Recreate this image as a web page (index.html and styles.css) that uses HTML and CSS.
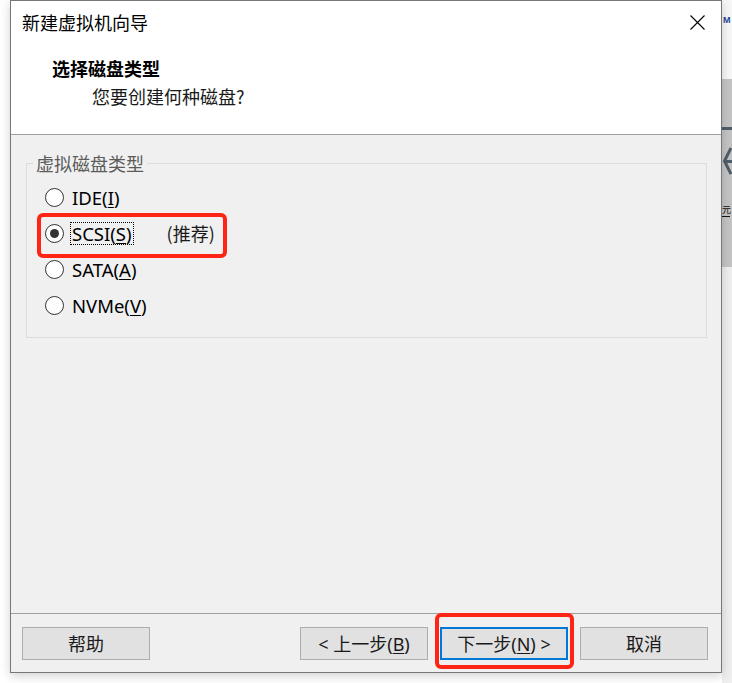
FILE: index.html
```html
<!DOCTYPE html>
<html lang="zh-CN">
<head>
<meta charset="utf-8">
<title>新建虚拟机向导</title>
<link rel="stylesheet" href="styles.css">
</head>
<body>
<div class="screen">
  <div class="left-gap"></div>
  <div class="dialog">
    <div class="header">
      <div class="titlebar">
        <span class="title">新建虚拟机向导</span>
        <span class="close"><svg viewBox="0 0 15 15" width="15" height="15"><path d="M0.5 0.5 L14.5 14.5 M14.5 0.5 L0.5 14.5" stroke="#000" stroke-width="1.1" fill="none"/></svg></span>
      </div>
      <div class="heading">选择磁盘类型</div>
      <div class="subheading">您要创建何种磁盘?</div>
    </div>
    <div class="body">
      <fieldset class="group">
        <legend>虚拟磁盘类型</legend>
        <div class="option"><span class="radio"></span><span class="label">IDE(<u>I</u>)</span></div>
        <div class="option"><span class="radio checked"></span><span class="label focus">SCSI(<u>S</u>)</span><span class="hint">(推荐)</span><span class="mark mark-option"></span></div>
        <div class="option"><span class="radio"></span><span class="label">SATA(<u>A</u>)</span></div>
        <div class="option"><span class="radio"></span><span class="label">NVMe(<u>V</u>)</span></div>
      </fieldset>
    </div>
    <div class="footer">
      <button class="btn">帮助</button>
      <div class="spacer"></div>
      <button class="btn">&lt; 上一步(<u>B</u>)</button>
      <button class="btn primary">下一步(<u>N</u>) &gt;<span class="mark mark-button"></span></button>
      <button class="btn">取消</button>
    </div>
  </div>
  <div class="right-bg">
    <div class="bg-top"><span class="bg-logo">M</span></div>
    <div class="bg-mid">
      <svg viewBox="0 0 10 188" width="10" height="188">
        <rect x="0" y="48" width="10" height="3" fill="#4f5e69"/>
        <path d="M9 69 L2.5 82 L9 95" stroke="#4f5e69" stroke-width="3" fill="none"/>
        <rect x="3" y="81" width="7" height="3" fill="#4f5e69"/>
        <text x="0" y="134" font-size="9" font-family="Noto Sans CJK SC" fill="#111">元</text>
        <rect x="0" y="137" width="8" height="1" fill="#111"/>
      </svg>
    </div>
    <div class="bg-bottom"></div>
  </div>
</div>
</body>
</html>
```

FILE: styles.css
```css
* {
  box-sizing: border-box;
}

html,
body {
  margin: 0;
  padding: 0;
}

body {
  background: #ffffff;
  font-family: "Noto Sans", "Noto Sans CJK SC", sans-serif;
  color: #000000;
}

.screen {
  display: flex;
  width: 732px;
  height: 683px;
  overflow: hidden;
  background: #ffffff;
}

.left-gap {
  width: 10px;
  flex: none;
}

.dialog {
  width: 712px;
  height: 673px;
  flex: none;
  border: 1px solid #777777;
  background: #f0f0f0;
  display: flex;
  flex-direction: column;
  position: relative;
  z-index: 1;
  box-shadow: 0 3px 10px rgba(0, 0, 0, 0.18);
}

/* header */
.header {
  height: 134px;
  flex: none;
  background: #ffffff;
  border-bottom: 1px solid #a0a0a0;
}

.titlebar {
  height: 42px;
  display: flex;
  align-items: center;
  justify-content: space-between;
  padding: 0 16px 0 11px;
}

.title {
  font-family: "Noto Sans CJK SC", sans-serif;
  font-size: 18px;
  line-height: 24px;
}

.close svg {
  display: block;
}

.heading {
  font-family: "Noto Sans CJK SC", sans-serif;
  font-weight: 700;
  font-size: 18px;
  line-height: 26px;
  margin-top: 12px;
  padding-left: 41px;
}

.subheading {
  font-family: "Noto Sans CJK SC", sans-serif;
  font-size: 18px;
  line-height: 26px;
  margin-top: 2px;
  padding-left: 81px;
  color: #1a1a1a;
}

/* body */
.body {
  flex: 1;
  padding: 18px 14px 0 15px;
}

.group {
  margin: 0;
  padding: 6px 0 14px 0;
  border: 1px solid #dcdcdc;
  min-width: 0;
}

.group legend {
  font-family: "Noto Sans CJK SC", sans-serif;
  font-size: 18px;
  line-height: 20px;
  padding: 0 3px;
  margin-left: 6px;
  color: #5c5c5c;
}

.option {
  position: relative;
  height: 36px;
  display: flex;
  align-items: center;
  padding-left: 18px;
}

.radio {
  width: 19px;
  height: 19px;
  flex: none;
  border: 1px solid #333333;
  border-radius: 50%;
  background: #ffffff;
  display: flex;
  align-items: center;
  justify-content: center;
}

.radio.checked::before {
  content: "";
  width: 9px;
  height: 9px;
  border-radius: 50%;
  background: #333333;
}

.label {
  margin-left: 6px;
  border: 1px dotted transparent;
  padding: 0 1px;
  font-size: 18.5px;
  line-height: 21px;
  color: #000000;
}

.label.focus {
  border-color: #000000;
}

u {
  text-decoration: underline;
  text-underline-offset: 2px;
}

.hint {
  margin-left: 33px;
  font-family: "Noto Sans CJK SC", sans-serif;
  font-size: 18px;
  color: #1a1a1a;
}

/* red annotations */
.mark {
  position: absolute;
  border: 4px solid #ff2414;
  border-radius: 6px;
  pointer-events: none;
}

.mark-option {
  left: 10px;
  top: -2px;
  width: 190px;
  height: 45px;
}

.mark-button {
  left: -7px;
  top: -16px;
  width: 139px;
  height: 56px;
}

/* footer */
.footer {
  flex: none;
  display: flex;
  align-items: flex-start;
  gap: 12px;
  border-top: 1px solid #a0a0a0;
  padding: 13px 13px 12px 11px;
}

.spacer {
  flex: 1;
}

.btn {
  position: relative;
  width: 128px;
  height: 33px;
  flex: none;
  padding: 0;
  border: 1px solid #adadad;
  background: #e1e1e1;
  font-family: "Noto Sans", "Noto Sans CJK SC", sans-serif;
  font-size: 18px;
  line-height: 20px;
  color: #1a1a1a;
}

.btn.primary {
  border: 2px solid #0078d7;
}

/* background application peeking at the right edge */
.right-bg {
  width: 10px;
  flex: none;
  display: flex;
  flex-direction: column;
}

.bg-top {
  height: 79px;
  background: #f7f7f7;
  padding-top: 14px;
}

.bg-logo {
  display: block;
  font-family: "Liberation Sans", sans-serif;
  font-weight: 700;
  font-size: 9px;
  line-height: 12px;
  color: #23479b;
  padding-left: 1px;
}

.bg-mid {
  height: 188px;
  background: #c4c4c4;
}

.bg-mid svg {
  display: block;
}

.bg-bottom {
  flex: 1;
  background: #efefef;
}
```
